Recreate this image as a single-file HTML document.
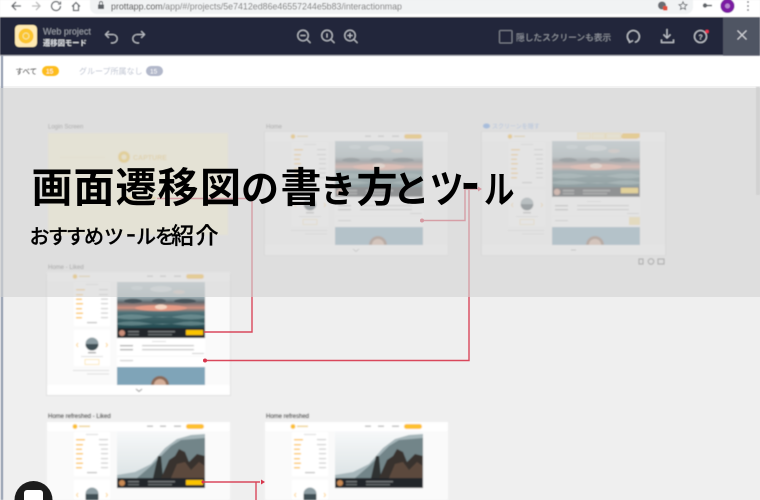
<!DOCTYPE html>
<html lang="ja"><head><meta charset="utf-8">
<style>
html,body{margin:0;padding:0;width:760px;height:500px;overflow:hidden;background:#efefef}
body{position:relative;font-family:"Liberation Sans","Noto Sans CJK JP",sans-serif}
svg.main{position:absolute;left:0;top:0}
.ov{position:absolute;left:0;top:88px;width:760px;height:209px;background:rgba(212,212,212,.625)}
</style></head><body>
<svg class="main" width="760" height="500" viewBox="0 0 760 500" xmlns="http://www.w3.org/2000/svg" font-family="'Liberation Sans','Noto Sans CJK JP',sans-serif">
<defs>
<filter id="b1" x="-2%" y="-2%" width="104%" height="104%"><feGaussianBlur stdDeviation=".8"/></filter>
<filter id="b2" x="-2%" y="-2%" width="104%" height="104%"><feGaussianBlur stdDeviation=".5"/></filter>
<filter id="b3" x="-2%" y="-2%" width="104%" height="104%"><feGaussianBlur stdDeviation=".3"/></filter>
<linearGradient id="sea" x1="0" y1="0" x2="0" y2="1">
<stop offset="0" stop-color="#b0c2c8"/><stop offset=".28" stop-color="#9aabb0"/><stop offset=".36" stop-color="#5d686e"/><stop offset=".46" stop-color="#d08f80"/><stop offset=".54" stop-color="#4f7278"/><stop offset=".82" stop-color="#234a50"/><stop offset="1" stop-color="#1d3438"/>
</linearGradient>
<linearGradient id="sky" x1="0" y1="0" x2="0" y2="1"><stop offset="0" stop-color="#f6f8f9"/><stop offset="1" stop-color="#d6dee0"/></linearGradient>
<symbol id="sunset" viewBox="0 0 88 56" width="88" height="56">
<rect width="88" height="56" fill="url(#sea)"/>
<ellipse cx="44" cy="26" rx="26" ry="3" fill="#e59a85"/><ellipse cx="44" cy="25" rx="6" ry="2.500" fill="#f5d6c3"/>
<ellipse cx="16" cy="19" rx="9" ry="2.200" fill="#47525a"/><ellipse cx="68" cy="19" rx="11" ry="2.200" fill="#47525a"/><ellipse cx="42" cy="19" rx="7" ry="2.200" fill="#545f66"/>
<ellipse cx="44" cy="7" rx="11" ry="3" fill="#c8d3d6"/><ellipse cx="62" cy="10" rx="6" ry="2" fill="#c9bdb8"/><ellipse cx="20" cy="6" rx="6" ry="2" fill="#bcccd0"/>
<path d="M0 34q14-3 30 0t30 0 28 0v2q-14 3-28 0t-30 0-30 0zM0 41q14-3 30 0t30 0 28 0v1.500q-14 2-28 0t-30 0-30 0z" fill="#86a5a8" opacity=".55"/>
<rect y="46" width="88" height="10" fill="#22282b"/>
<circle cx="5" cy="51" r="3" fill="#c98d78"/>
<rect x="11" y="49" width="11" height="1.300" fill="#7c7f80"/><rect x="11" y="52" width="11" height="1.300" fill="#6c6f70"/>
<rect x="31" y="49" width="27" height="1.300" fill="#7c7f80"/><rect x="31" y="52" width="24" height="1.300" fill="#6c6f70"/>
</symbol>
<symbol id="mount" viewBox="0 0 88 56" width="88" height="56">
<rect width="88" height="56" fill="url(#sky)"/>
<path d="M0 43 18 40 34 32 48 16 60 7 74 3 88 2V56H0Z" fill="#a6b6ba"/>
<path d="M20 46 34 34 44 24 54 14 64 8 88 6V46Z" fill="#728589"/>
<path d="M36 46 41 24 44 24 46 46Z" fill="#2e3030"/>
<path d="M44 46 52 28 58 24 62 17 68 20 72 30 80 22 88 24V56H44Z" fill="#38322e"/>
<path d="M54 46 60 32 68 30 74 38 82 30 88 34V46Z" fill="#5c4a3c"/>
<rect y="46" width="88" height="10" fill="#22282b"/>
<circle cx="5" cy="51" r="3" fill="#c98a52"/>
<rect x="11" y="49" width="11" height="1.300" fill="#7c7f80"/><rect x="11" y="52" width="11" height="1.300" fill="#6c6f70"/>
<rect x="31" y="49" width="27" height="1.300" fill="#7c7f80"/><rect x="31" y="52" width="24" height="1.300" fill="#6c6f70"/>
</symbol>
<symbol id="side" viewBox="0 0 183 123" width="183" height="123">
<rect width="183" height="123" fill="#fafafa"/>
<rect width="183" height="9" fill="#fff"/>
<circle cx="28" cy="4.500" r="2.400" fill="#fbc02d"/><rect x="32" y="3.500" width="11" height="1.600" fill="#efd695"/>
<rect x="100" y="3.500" width="6" height="1.400" fill="#bbb"/><rect x="113" y="3.500" width="6" height="1.400" fill="#bbb"/><rect x="127" y="3.500" width="7" height="1.400" fill="#bbb"/>
<rect x="139" y="2" width="18" height="5" rx="2.500" fill="#fdc02f"/>
<rect x="27" y="10" width="36" height="44" fill="#fff"/>
<rect x="39" y="12" width="12" height="1" fill="#d8d8d8"/>
<g fill="#fcc850"><rect x="29" y="17" width="9" height="1.500"/><rect x="29" y="22" width="7" height="1.500"/><rect x="29" y="26.500" width="6" height="1.500"/><rect x="29" y="31" width="7" height="1.500"/><rect x="29" y="36" width="6" height="1.500"/><rect x="29" y="40.500" width="7" height="1.500"/><rect x="29" y="45" width="6" height="1.500"/></g>
<g fill="#ccc"><rect x="52" y="17" width="9" height="1.200"/><rect x="52" y="22" width="9" height="1.200"/><rect x="54" y="26.500" width="7" height="1.200"/><rect x="54" y="31" width="7" height="1.200"/><rect x="54" y="36" width="7" height="1.200"/><rect x="54" y="40.500" width="7" height="1.200"/><rect x="54" y="45" width="7" height="1.200"/></g>
<rect x="40" y="50" width="10" height="1.200" fill="#bbb"/>
<rect x="27" y="58" width="36" height="36" fill="#fff"/>
<circle cx="45" cy="72" r="6.500" fill="#8d9da3"/><path d="M38.500 72a6.500 6.500 0 0 0 13 0z" fill="#3f4f55"/>
<rect x="41" y="80" width="8" height="1.300" fill="#999"/><rect x="34" y="84" width="22" height="1" fill="#ddd"/>
<rect x="38" y="87.500" width="14" height="5" fill="#fff" stroke="#f8d98c" stroke-width=".6"/>
<path d="M31 71l-1.500 2 1.500 2M59 71l1.500 2-1.500 2" fill="none" stroke="#fbc143" stroke-width=".7"/>
<rect x="26" y="98" width="36" height="1" fill="#ddd"/><rect x="40" y="101.500" width="22" height="1" fill="#ddd"/>
</symbol>
<symbol id="sideB" viewBox="0 0 183 78" width="183" height="78">
<rect width="183" height="78" fill="#fafafa"/>
<rect width="183" height="9" fill="#fff"/>
<circle cx="28" cy="4.500" r="2.400" fill="#fbc02d"/><rect x="32" y="3.500" width="11" height="1.600" fill="#efd695"/>
<rect x="100" y="3.500" width="6" height="1.400" fill="#bbb"/><rect x="113" y="3.500" width="6" height="1.400" fill="#bbb"/><rect x="127" y="3.500" width="7" height="1.400" fill="#bbb"/>
<rect x="139" y="2" width="18" height="5" rx="2.500" fill="#fdc02f"/>
<rect x="27" y="10" width="36" height="44" fill="#fff"/>
<rect x="39" y="12" width="12" height="1" fill="#d8d8d8"/>
<g fill="#fcc850"><rect x="29" y="17" width="9" height="1.500"/><rect x="29" y="22" width="7" height="1.500"/><rect x="29" y="26.500" width="6" height="1.500"/><rect x="29" y="31" width="7" height="1.500"/><rect x="29" y="36" width="6" height="1.500"/><rect x="29" y="40.500" width="7" height="1.500"/><rect x="29" y="45" width="6" height="1.500"/></g>
<g fill="#ccc"><rect x="52" y="17" width="9" height="1.200"/><rect x="52" y="22" width="9" height="1.200"/><rect x="54" y="26.500" width="7" height="1.200"/><rect x="54" y="31" width="7" height="1.200"/><rect x="54" y="36" width="7" height="1.200"/><rect x="54" y="40.500" width="7" height="1.200"/><rect x="54" y="45" width="7" height="1.200"/></g>
<rect x="40" y="50" width="10" height="1.200" fill="#bbb"/>
<rect x="27" y="58" width="36" height="20" fill="#fff"/>
<path d="M38.500 72a6.500 6.500 0 0 1 13 0v6h-13z" fill="#8d9da3"/><path d="M38.500 72h13v6h-13z" fill="#3f4f55"/>
<path d="M31 71l-1.500 2 1.500 2M59 71l1.500 2-1.500 2" fill="none" stroke="#fbc143" stroke-width=".7"/>
</symbol>
<symbol id="mid" viewBox="0 0 183 123" width="183" height="123">
<rect x="70" y="66" width="88" height="29" fill="#fff"/>
<rect x="105" y="69" width="14" height="1" fill="#ddd"/>
<rect x="73" y="73" width="13" height="1.300" fill="#aaa"/><rect x="73" y="77" width="13" height="1.300" fill="#aaa"/>
<rect x="95" y="73" width="52" height="1.200" fill="#c4c4c4"/><rect x="95" y="77" width="52" height="1.200" fill="#c4c4c4"/>
<rect x="145" y="81" width="12" height="1" fill="#ccc"/><rect x="70" y="84" width="88" height=".6" fill="#f0f0f0"/>
<rect x="73" y="88" width="13" height="1.200" fill="#ccc"/>
</symbol>
<symbol id="bottom" viewBox="0 0 88 18" width="88" height="18">
<rect width="88" height="18" fill="#7fa4b8"/>
<ellipse cx="43" cy="18" rx="9" ry="9" fill="#8a6a58"/><path d="M37 18a6 6 0 0 1 12 0z" fill="#d4ae98"/>
</symbol>
</defs>

<rect width="760" height="500" fill="#efefef"/>
<g filter="url(#b1)">
<rect x="46" y="274" width="185" height="122" fill="#e0e0e0"/>
<rect x="263.500" y="131" width="185" height="125" fill="#e4e4e4"/>
<rect x="480.500" y="131" width="186" height="125" fill="#e4e4e4"/>
<text x="48" y="128.500" font-size="6" fill="#666">Login Screen</text>
<rect x="48" y="133" width="180" height="102" fill="#fff9d6"/>
<circle cx="124" cy="157" r="6" fill="#f8c93c"/><circle cx="124" cy="157" r="2.500" fill="#fff0b8"/>
<text x="133" y="160" font-size="7" fill="#f3cf6b" font-weight="bold">CAPTURE</text>
<rect x="60" y="157" width="45" height="1" fill="#f8efc4"/>
<rect x="120" y="197" width="36" height="2" fill="#fdd35a"/>
<text x="266" y="128.500" font-size="6" fill="#666">Home</text>
<use href="#side" x="265" y="132"/><use href="#sunset" x="335" y="141"/><use href="#mid" x="265" y="132"/><use href="#bottom" x="335" y="227"/>
<rect x="265" y="245" width="182" height="10" fill="#fff"/>
<path d="M353 249l3 2.500 3-2.500" fill="none" stroke="#999" stroke-width=".8"/>
<ellipse cx="486.500" cy="126" rx="3.500" ry="2.500" fill="#5f97e8"/>
<text x="492" y="128.500" font-size="6" fill="#7aa5ea">スクリーンを隠す</text>
<use href="#side" x="482" y="132"/><use href="#sunset" x="552" y="141"/><use href="#mid" x="482" y="132"/><use href="#bottom" x="552" y="227"/>
<g fill="#fff3c9" stroke="#fcd873" stroke-width=".6"><rect x="577.500" y="133" width="13" height="6"/><rect x="592" y="133" width="13" height="6"/><rect x="606" y="133" width="15" height="6"/></g>
<rect x="622" y="133" width="18" height="5" rx="1" fill="#fdc02f"/>
<rect x="629" y="217" width="11" height="8" fill="#fbe39c"/>
<rect x="621" y="188" width="17" height="5" fill="#f9cd3a"/>
<rect x="482" y="245" width="183" height="10" fill="#fff"/>
<path d="M571 250h5" stroke="#999"/>
<g fill="none" stroke="#555" stroke-width=".9"><rect x="639" y="259" width="4" height="5"/><circle cx="651" cy="261.500" r="2.800"/><rect x="658" y="259" width="6" height="5"/></g>
<text x="48" y="269" font-size="6" fill="#555">Home - Liked</text>
<use href="#side" x="47" y="272"/><use href="#sunset" x="117" y="282"/><use href="#mid" x="47" y="272"/><use href="#bottom" x="117" y="367"/>
<rect x="186" y="330" width="17" height="5" fill="#fbc400"/>
<rect x="47" y="385" width="183" height="10" fill="#fff"/>
<path d="M136 389l3 2.500 3-2.500" fill="none" stroke="#888" stroke-width=".9"/>
<text x="48" y="418" font-size="6" fill="#333">Home refreshed - Liked</text>
<use href="#sideB" x="47" y="422"/><use href="#mount" x="117" y="432"/>
<rect x="186" y="480" width="17" height="5" fill="#fbc400"/>
<text x="266" y="418" font-size="6" fill="#333">Home refreshed</text>
<use href="#sideB" x="265" y="422"/><use href="#mount" x="335" y="432"/>
</g>
<g filter="url(#b3)">
<g fill="none" stroke="#d7354c" stroke-width="1.400" opacity=".9">
<path d="M157 198.500H252V332H204"/><path d="M205 360.500H469V190"/><path d="M422 220.500H465V189H478"/>
<path d="M203 482H260"/><path d="M256 482V500"/>
</g>
<g fill="#d7354c"><circle cx="205" cy="360.500" r="2"/><circle cx="422" cy="220.500" r="2"/><circle cx="203" cy="482" r="1.500"/><path d="M482 189l-4-2.500v5zM265 482l-4-2.500v5z"/></g>
</g>

<rect y="56" width="760" height="31" fill="#fff"/><rect y="86" width="760" height="2" fill="#f2f2f2"/>
<g filter="url(#b2)">
<text x="15.500" y="74" font-size="7.500" fill="#444">すべて</text>
<rect x="42" y="66" width="17" height="10" rx="5" fill="#fdbd1a"/><text x="46" y="73.500" font-size="6.500" fill="#fff">15</text>
<text x="79" y="74" font-size="8" fill="#c1c6d2">グループ所属なし</text>
<rect x="146" y="66" width="17" height="10" rx="5" fill="#b2b8ca"/><text x="150" y="73.500" font-size="6.500" fill="#fff">15</text>
<rect x="756" y="87" width="4" height="108" fill="#d0d0d0"/>

<rect width="760" height="17" fill="#fff"/>
<path d="M90 0H693V7a7 7 0 0 1-7 7H97a7 7 0 0 1-7-7Z" fill="#f1f3f4"/>
<g fill="none" stroke="#5f6368" stroke-width="1.300">
<path d="M21 6H12M16 2 12 6l4 4"/>
<path d="M32 6H40M36 2l4 4-4 4" stroke="#bbb"/>
<path d="M60.500 6a4.500 4.500 0 1 1-1.400-3.200M60.500 1.500v2.500H58"/>
<path d="M72 6.500 76 2.500l4 4M73.500 5.500V10.500h5V5.500"/>
</g>
<rect x="98" y="4.500" width="6" height="4.500" fill="#5f6368"/><path d="M99.500 4.500V3a1.500 1.500 0 0 1 3 0v1.500" fill="none" stroke="#5f6368"/>
<text x="111" y="9.500" font-size="9.300" fill="#777" textLength="291" lengthAdjust="spacingAndGlyphs"><tspan fill="#333">prottapp.com</tspan>/app/#/projects/5e7412ed86e46557244e5b83/interactionmap</text>
<circle cx="662" cy="5.500" r="4" fill="#6a6d72"/><rect x="663" y="6" width="4.500" height="4.500" rx="1" fill="#e2503c"/>
<path d="M683 1.800l1.200 2.600 2.800.3-2.100 1.900.6 2.800-2.500-1.400-2.500 1.400.6-2.800-2.100-1.900 2.800-.3z" fill="none" stroke="#5f6368" stroke-width=".9"/>
<circle cx="705" cy="5.500" r="2.200" fill="#5f6368"/><rect x="706" y="4.800" width="6" height="1.500" fill="#5f6368"/>
<path d="M720.500 6a7 7 0 0 1 14 0 7 7 0 0 1-14 0z" fill="#7b1fa2"/><circle cx="727.500" cy="6" r="2.500" fill="#b98ad0"/>
<g fill="#5f6368"><circle cx="748" cy="2" r=".9"/><circle cx="748" cy="6" r=".9"/><circle cx="748" cy="10" r=".9"/></g>

<rect y="17" width="760" height="38.500" fill="#20273a"/>
<rect y="55" width="760" height="1" fill="#a7abb6"/>
<rect x="723" y="17" width="37" height="38.500" fill="#4f5564"/>
<rect x="15" y="25" width="22" height="22" rx="4" fill="#ffeab2"/>
<circle cx="26" cy="36" r="7.500" fill="#fbc52f"/><circle cx="26" cy="36" r="3" fill="none" stroke="#f7e29a" stroke-width="1.200"/>
<text x="43" y="34.500" font-size="9" fill="#9da1ac">Web project</text>
<text x="43" y="45.500" font-size="7.300" fill="#dfe1e5" font-weight="bold">遷移図モード</text>
<g fill="none" stroke="#bfc2ca" stroke-width="1.100">
<path d="M106 34.500h7a4.200 4.200 0 0 1 0 8.400h-2M108.800 31.200 105.500 34.500l3.300 3.300"/>
<path d="M144 34.500h-7a4.200 4.200 0 0 0 0 8.400h2M141.200 31.200 144.500 34.500l-3.300 3.300"/>
<circle cx="303" cy="35.500" r="5.300"/><path d="M307 39.500l3.500 3.500M300.500 35.500h5"/>
<circle cx="327" cy="35.500" r="5.300"/><path d="M331 39.500l3.500 3.500M327 33.500v4"/>
<circle cx="350" cy="35.500" r="5.300"/><path d="M354 39.500l3.500 3.500M347.500 35.500h5M350 33v5"/>
</g>
<rect x="499.500" y="30.500" width="12.500" height="12.500" rx="1" fill="none" stroke="#7e828d" stroke-width="1.100"/>
<text x="516" y="40.500" font-size="8.700" fill="#9a9da7">隠したスクリーンも表示</text>
<g fill="none" stroke="#bfc2ca" stroke-width="1.300">
<path d="M630 41.500a6 6 0 1 1 5 .8"/><path d="M628 38.500 629.500 42.500 633 40.500" stroke-width="1.100"/>
<path d="M667 29v8.500M663.500 34.500l3.500 3.500 3.500-3.500M661.500 39.500v3h12v-3"/>
<circle cx="700.500" cy="36.500" r="6"/>
</g>
<text x="698.500" y="39.500" font-size="7" fill="#bfc2ca" font-weight="bold">?</text>
<circle cx="707" cy="31.500" r="1.800" fill="#f1324b"/>
<path d="M737.500 30.500l9 9M746.500 30.500l-9 9" stroke="#d5d7dc" stroke-width="1.200" fill="none"/>
<rect x="1" y="56" width="2" height="444" fill="#8d97aa"/>
</g>
</svg>
<div class="ov"></div>
<svg class="main" width="760" height="500" viewBox="0 0 760 500" xmlns="http://www.w3.org/2000/svg" font-family="'Noto Sans CJK JP',sans-serif">
<g filter="url(#b3)"><path d="M14.500 500a19 19 0 0 1 38 0z" fill="#1a1a1a"/><path d="M24 500V493a3 3 0 0 1 3-3h13a3 3 0 0 1 3 3v7z" fill="#fff"/></g>
<g fill="#000" font-weight="700">
<text y="202"><tspan x="31.500 73.500 115.500 157.500 200" font-size="41">画面遷移図</tspan><tspan x="241" font-size="38">の</tspan><tspan x="280.500" font-size="41">書</tspan><tspan x="320" font-size="36">き</tspan><tspan x="356.500" font-size="41">方</tspan><tspan x="392.500" font-size="37">と</tspan></text>
<text transform="translate(429.600 203) scale(.85 1)" font-size="40">ツ</text>
<text transform="translate(462 201) scale(.42 1)" font-size="40">ー</text>
<text transform="translate(484 203) scale(.8 1)" font-size="38">ル</text>
</g>
<g fill="#000" font-weight="500" stroke="#000" stroke-width=".25">
<text y="243.500"><tspan x="29.500 48 66 84 104" font-size="20">おすすめツ</tspan></text>
<text transform="translate(126.500 243) scale(.45 1)" font-size="20">ー</text>
<text y="243.500"><tspan x="136 155" font-size="20">ルを</tspan><tspan x="171 195.500" font-size="23">紹介</tspan></text>
</g>
</svg>
</body></html>
